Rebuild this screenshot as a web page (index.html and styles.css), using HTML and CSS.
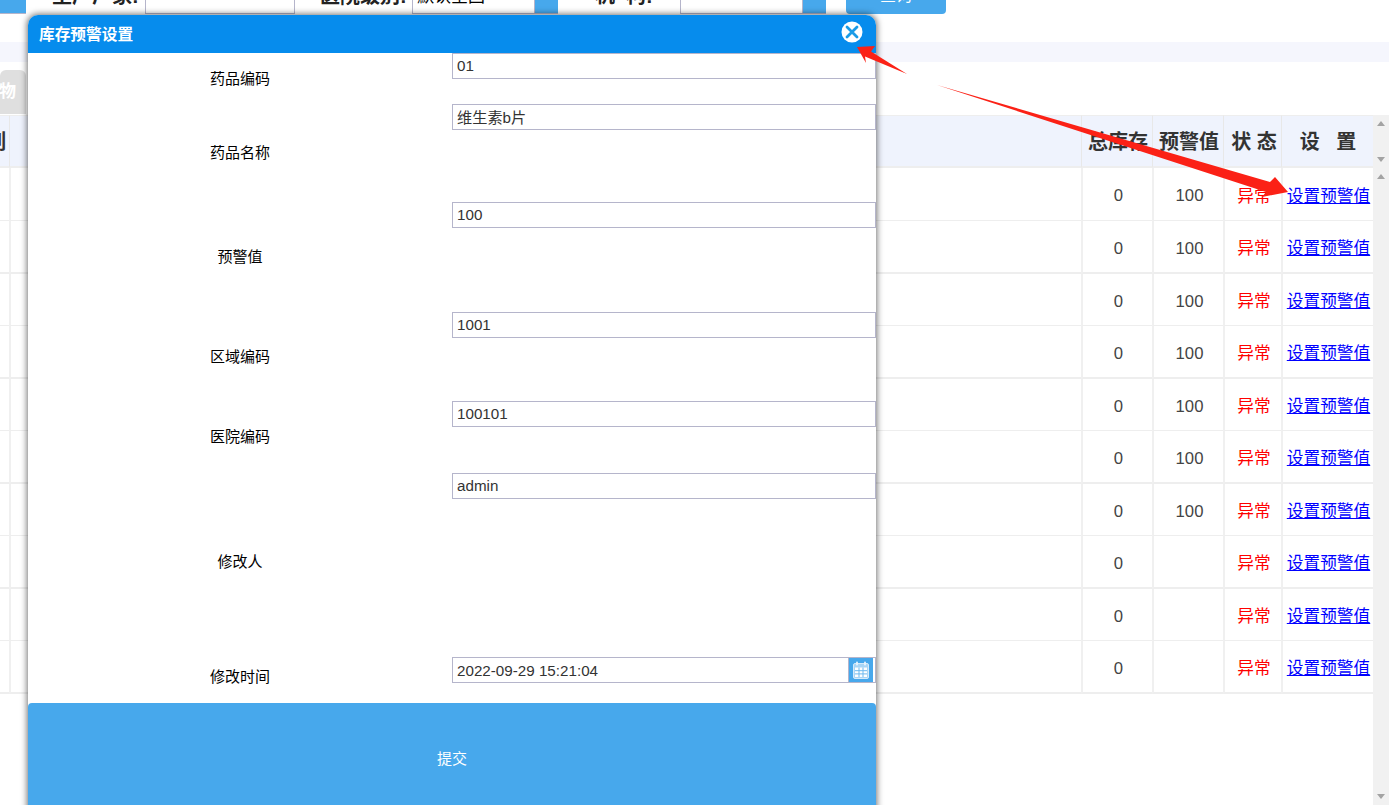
FILE: index.html
```html
<!DOCTYPE html>
<html lang="zh-CN">
<head>
  <meta charset="UTF-8">
  <meta name="viewport" content="width=device-width, initial-scale=1.0">
  <title>库存预警设置</title>
  <link rel="stylesheet" href="styles.css">
</head>
<body>

  <div class="filter">
    <div class="filter-row">
      <span class="filter-btn filter-btn-left"></span>
      <label class="filter-label filter-label-1">生产厂家:</label>
      <input class="filter-input filter-input-1" type="text">
      <label class="filter-label filter-label-2">医院级别:</label>
      <input class="filter-input filter-input-2" type="text" value="默认全国">
      <span class="filter-btn"></span>
      <label class="filter-label filter-label-3">机&nbsp;&nbsp;构:</label>
      <input class="filter-input filter-input-3" type="text">
      <span class="filter-btn"></span>
      <button class="query">查询</button>
    </div>
  </div>

  <div class="band"></div>

  <div class="tabs"><span class="tab">物</span></div>

  <div class="grid-wrap">
    <div class="grid-main">
      <table class="grid grid-head">
        <colgroup><col class="c1"><col class="c2"><col class="c3"><col class="c4"><col class="c5"><col class="c6"></colgroup>
        <tr>
          <th class="first">列</th><th></th>
          <th class="th-num">总库存</th><th class="th-num">预警值</th><th class="th-state">状 态</th><th class="th-set">设&nbsp;&nbsp;&nbsp;置</th>
        </tr>
      </table>
      <table class="grid grid-body">
        <colgroup><col class="c1"><col class="c2"><col class="c3"><col class="c4"><col class="c5"><col class="c6"></colgroup>
        <tr><td></td><td></td><td>0</td><td>100</td><td class="bad">异常</td><td class="set"><a href="#">设置预警值</a></td></tr>
        <tr><td></td><td></td><td>0</td><td>100</td><td class="bad">异常</td><td class="set"><a href="#">设置预警值</a></td></tr>
        <tr><td></td><td></td><td>0</td><td>100</td><td class="bad">异常</td><td class="set"><a href="#">设置预警值</a></td></tr>
        <tr><td></td><td></td><td>0</td><td>100</td><td class="bad">异常</td><td class="set"><a href="#">设置预警值</a></td></tr>
        <tr><td></td><td></td><td>0</td><td>100</td><td class="bad">异常</td><td class="set"><a href="#">设置预警值</a></td></tr>
        <tr><td></td><td></td><td>0</td><td>100</td><td class="bad">异常</td><td class="set"><a href="#">设置预警值</a></td></tr>
        <tr><td></td><td></td><td>0</td><td>100</td><td class="bad">异常</td><td class="set"><a href="#">设置预警值</a></td></tr>
        <tr><td></td><td></td><td>0</td><td></td><td class="bad">异常</td><td class="set"><a href="#">设置预警值</a></td></tr>
        <tr><td></td><td></td><td>0</td><td></td><td class="bad">异常</td><td class="set"><a href="#">设置预警值</a></td></tr>
        <tr><td></td><td></td><td>0</td><td></td><td class="bad">异常</td><td class="set"><a href="#">设置预警值</a></td></tr>
      </table>
    </div>
    <div class="scrollbar">
      <div class="scroll-head"><i class="up"></i><i class="down"></i></div>
      <div class="scroll-body"><i class="up"></i><i class="down"></i></div>
    </div>
  </div>

  <div class="dialog">
    <div class="dialog-title">
      <span class="dialog-name">库存预警设置</span>
      <svg class="dialog-close" width="22" height="22" viewBox="0 0 22 22">
        <circle cx="11" cy="11" r="10.5" fill="#fff"/>
        <path d="M6 6 L16 16 M16 6 L6 16" stroke="#1a9be6" stroke-width="2.8" stroke-linecap="round"/>
      </svg>
    </div>
    <form class="dialog-form">
      <div class="field f1"><label>药品编码</label><input type="text" value="01"></div>
      <div class="field f2"><label>药品名称</label><input type="text" value="维生素b片"></div>
      <div class="field f3"><label>预警值</label><input type="text" value="100"></div>
      <div class="field f4"><label>区域编码</label><input type="text" value="1001"></div>
      <div class="field f5"><label>医院编码</label><input type="text" value="100101"></div>
      <div class="field f6"><label>修改人</label><input type="text" value="admin"></div>
      <div class="field f7">
        <label>修改时间</label>
        <div class="date-box">
          <input type="text" value="2022-09-29 15:21:04">
          <span class="date-btn">
            <svg width="16" height="18" viewBox="0 0 16 18">
              <rect x="0.5" y="2.5" width="15" height="15" rx="1.5" fill="#a9d5f5" stroke="#d5eafa"/>
              <rect x="3" y="0.5" width="2" height="4" rx="1" fill="#e6f3fc"/>
              <rect x="11" y="0.5" width="2" height="4" rx="1" fill="#e6f3fc"/>
              <path d="M2 6.5 H14 V16 H2 Z" fill="#fff"/>
              <path d="M2 9.7 H14 M2 12.9 H14 M6 6.5 V16 M10 6.5 V16" stroke="#6db9ef" stroke-width="1"/>
            </svg>
          </span>
        </div>
      </div>
      <button class="submit" type="button">提交</button>
    </form>
  </div>

  <svg class="arrows" width="1389" height="805" viewBox="0 0 1389 805">
    <polygon fill="#fb2116" points="857,47 875,46 871,51.5 907,74 865,56.5 866,63"/>
    <polygon fill="#fb2116" points="937,85 1270,182 1275,177 1288,192 1262,197 1266,192"/>
  </svg>

</body>
</html>
```

FILE: styles.css
```css
html, body {
  margin: 0;
  height: 805px;
  overflow: hidden;
}

body {
  position: relative;
  background: #fff;
  font-family: "Liberation Sans", "Noto Sans CJK SC", sans-serif;
  font-size: 16px;
  color: #333;
}

/* top filter bar, scrolled mostly out of view */
.filter {
  height: 14px;
  overflow: hidden;
}

.filter-row {
  display: flex;
  align-items: center;
  height: 40px;
  margin-top: -26px;
}

.filter-btn {
  width: 23px;
  height: 40px;
  background: #47a8ec;
  border-bottom: 1px solid #b5b5cb;
  box-sizing: border-box;
}

.filter-btn-left {
  width: 26px;
}

.filter-label {
  font-size: 20px;
  font-weight: bold;
  color: #222;
  white-space: nowrap;
}

.filter-label-1 { margin-left: 26px; width: 93px; }
.filter-label-2 { margin-left: 25px; width: 92px; }
.filter-label-3 { margin-left: 37px; width: 85px; }

.filter-input {
  box-sizing: border-box;
  height: 40px;
  border: 1px solid #b5b5cb;
  padding: 0 4px;
  font: 17px "Liberation Sans", "Noto Sans CJK SC", sans-serif;
}

.filter-input-1 { width: 150px; }
.filter-input-2 { width: 123px; }
.filter-input-3 { width: 123px; }

.query {
  width: 100px;
  height: 40px;
  margin-left: 20px;
  border: none;
  border-radius: 4px;
  background: #47a8ec;
  color: #fff;
  font-size: 16px;
}

.band {
  height: 20px;
  margin-top: 28px;
  background: #f5f6fd;
}

.tabs {
  height: 44px;
  margin-top: 8px;
  margin-bottom: 1px;
}

.tab {
  display: block;
  width: 26px;
  height: 44px;
  box-sizing: border-box;
  background: #dfdfdf;
  border-radius: 6px 6px 0 0;
  color: #fff;
  font-size: 17px;
  font-weight: bold;
  line-height: 44px;
  text-indent: -1px;
}

/* table */
.grid-wrap {
  display: flex;
}

.grid-main {
  width: 1373px;
}

.grid {
  width: 1373px;
  border-collapse: separate;
  border-spacing: 0;
  table-layout: fixed;
}

.c1 { width: 9px; }
.c2 { width: 1072px; }
.c3 { width: 71px; }
.c4 { width: 71px; }
.c5 { width: 58px; }
.c6 { width: 92px; }

.grid-head th {
  box-sizing: border-box;
  height: 53px;
  padding: 0 0 2px;
  background: #eff3fd;
  border-top: 1px solid #eee;
  border-bottom: 2px solid #eee;
  border-left: 1px solid #e8e8e8;
  font-size: 20px;
  font-weight: bold;
  color: #333;
  white-space: nowrap;
  overflow: hidden;
}

.grid-head th.first {
  border-left: none;
  padding-right: 3px;
  direction: rtl;
  text-align: right;
}

.grid-head .th-num {
  padding-left: 2px;
}

.grid-head .th-state {
  padding-left: 3px;
}

.grid-head .th-set {
  padding-left: 1px;
}

.grid-body td {
  box-sizing: border-box;
  height: 52px;
  padding: 4px 0 0 2px;
  border-left: 2px solid #f0f0f0;
  border-bottom: 1px solid #eee;
  text-align: center;
  font-size: 16.7px;
  color: #444;
}

.grid-body tr:first-child td {
  height: 53px;
}

.grid-body tr:nth-child(even) td {
  height: 53px;
  border-bottom-width: 2px;
}

.grid-body td:first-child {
  border-left: none;
}

.grid-body .bad {
  padding-top: 1px;
  color: #f00;
}

.grid-body .set {
  padding: 1px 0 0 1px;
}

.grid-body a {
  color: #00f;
}

.scrollbar {
  display: flex;
  flex-direction: column;
  width: 16px;
  height: 690px;
  background: #f1f1f1;
}

.scroll-head {
  position: relative;
  height: 53px;
}

.scroll-body {
  position: relative;
  flex: 1;
}

.scrollbar i {
  position: absolute;
  left: 4px;
  width: 0;
  height: 0;
  border-left: 4px solid transparent;
  border-right: 4px solid transparent;
}

.scrollbar i.up {
  top: 6px;
  border-bottom: 5px solid #a3a3a3;
}

.scrollbar i.down {
  bottom: 6px;
  border-top: 5px solid #a3a3a3;
}

/* dialog */
.dialog {
  position: absolute;
  left: 28px;
  top: 15px;
  width: 848px;
  height: 800px;
  background: #fff;
  border-radius: 10px 10px 0 0;
  box-shadow: 0 0 6px 1px rgba(0, 0, 0, 0.55);
}

.dialog-title {
  display: flex;
  justify-content: space-between;
  align-items: center;
  height: 38px;
  padding: 0 13px 0 11px;
  background: #068ced;
  border-radius: 10px 10px 0 0;
  color: #fff;
  font-size: 15.7px;
  font-weight: bold;
}

.dialog-name {
  margin-top: -2px;
}

.dialog-close {
  margin-top: -5px;
}

.dialog-form {
  display: flex;
  flex-direction: column;
}

.field {
  display: grid;
  grid-template-columns: 424px 424px;
  font-size: 15px;
}

.field label {
  align-self: center;
  text-align: center;
  color: #000;
  line-height: 20px;
}

.field input {
  box-sizing: border-box;
  width: 424px;
  height: 26px;
  border: 1px solid #b5b5cb;
  padding: 0 4px 2px;
  font: 15.2px "Liberation Sans", "Noto Sans CJK SC", sans-serif;
  color: #333;
  outline: none;
}

.f1 { height: 51px; }
.f2 { height: 98px; }
.f3 { height: 110px; }
.f4 { height: 89px; }
.f5 { height: 72px; }
.f6 { height: 184px; }
.f7 { height: 46px; }

.field.f6 label { padding-bottom: 6px; }
.field.f7 label { padding-bottom: 6px; }

.date-box {
  position: relative;
  height: 26px;
}

.date-box input {
  padding-bottom: 0;
}

.date-btn {
  position: absolute;
  right: 3px;
  top: 1px;
  width: 25px;
  height: 24px;
  display: flex;
  align-items: center;
  justify-content: center;
  background: #47a8ec;
  border-left: 1px solid #b5b5cb;
  box-sizing: border-box;
}

.submit {
  height: 109px;
  border: none;
  border-radius: 4px;
  background: #47a8ec;
  color: #fff;
  font: 15px "Liberation Sans", "Noto Sans CJK SC", sans-serif;
  padding: 0;
}

.arrows {
  position: absolute;
  left: 0;
  top: 0;
  pointer-events: none;
}
```
